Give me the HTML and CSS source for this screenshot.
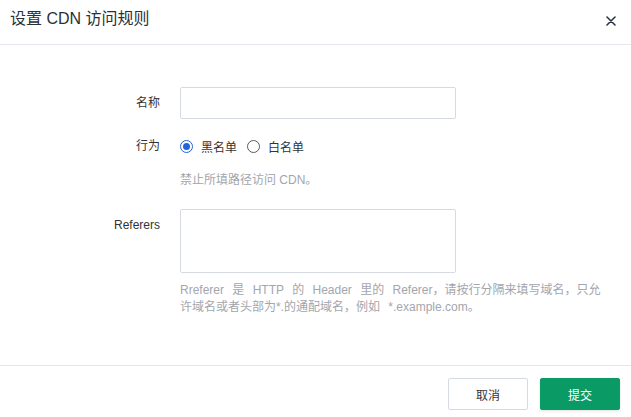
FILE: index.html
```html
<!DOCTYPE html>
<html lang="zh">
<head>
<meta charset="utf-8">
<link rel="stylesheet" href="styles.css">
</head>
<body>
<div class="dialog">
  <div class="dialog-header">
    <h1 class="dialog-title">设置 CDN 访问规则</h1>
    <button class="close-btn" aria-label="关闭">
      <svg width="10" height="10" viewBox="0 0 10 10"><path d="M1 1L9 9M9 1L1 9" stroke="#2b3340" stroke-width="1.6" stroke-linecap="round"/></svg>
    </button>
  </div>
  <div class="dialog-body">
    <div class="form-row row-name">
      <label class="form-label">名称</label>
      <div class="form-control"><input class="text-input" type="text"></div>
    </div>
    <div class="form-row row-action">
      <label class="form-label">行为</label>
      <div class="form-control">
        <div class="radio-group">
          <span class="radio checked"><span class="radio-dot"></span></span><span class="radio-text">黑名单</span>
          <span class="radio"></span><span class="radio-text">白名单</span>
        </div>
        <p class="hint">禁止所填路径访问 CDN。</p>
      </div>
    </div>
    <div class="form-row row-referers">
      <label class="form-label label-top">Referers</label>
      <div class="form-control">
        <textarea class="textarea"></textarea>
        <p class="hint hint-wide">Rreferer 是 HTTP 的 Header 里的 Referer，请按行分隔来填写域名，只允许域名或者头部为*.的通配域名，例如 *.example.com。</p>
      </div>
    </div>
  </div>
  <div class="dialog-footer">
    <button class="btn btn-cancel">取消</button>
    <button class="btn btn-primary">提交</button>
  </div>
</div>
</body>
</html>
```
FILE: styles.css
```css
* { box-sizing: border-box; }
html, body {
  margin: 0;
  padding: 0;
  background: #fff;
}
body {
  font-family: "Liberation Sans", "Noto Sans CJK SC", sans-serif;
  font-size: 12px;
  color: #333;
}
.dialog {
  width: 631px;
  height: 417px;
  display: flex;
  flex-direction: column;
}
.dialog-header {
  height: 45px;
  border-bottom: 1px solid #e4e8ee;
  display: flex;
  align-items: center;
  justify-content: space-between;
  padding: 0 15px 6px 10px;
}
.dialog-title {
  margin: 0;
  font-size: 16px;
  font-weight: normal;
  color: #2b2f36;
  line-height: 24px;
}
.close-btn {
  border: 0;
  background: none;
  padding: 0;
  width: 10px;
  height: 10px;
  display: flex;
  margin-top: 4px;
}
.dialog-body {
  flex: 1;
  padding-top: 42px;
}
.form-row {
  display: flex;
  align-items: flex-start;
}
.form-label {
  width: 160px;
  text-align: right;
  margin-right: 20px;
  color: #333;
  line-height: 32px;
}
.row-action { margin-top: 14px; }
.row-action .form-label { line-height: 26px; }
.row-referers { margin-top: 20px; }
.label-top { line-height: 32px; }
.text-input {
  display: block;
  width: 276px;
  height: 32px;
  border: 1px solid #d6dbe3;
  border-radius: 2px;
  outline: none;
  padding: 0 8px;
  margin: 0;
}
.radio-group {
  display: flex;
  align-items: center;
  height: 26px;
}
.radio {
  width: 13px;
  height: 13px;
  border: 1px solid #555b66;
  border-radius: 50%;
  display: inline-flex;
  align-items: center;
  justify-content: center;
  margin-right: 8px;
}
.radio.checked {
  border-color: #2463d8;
}
.radio-dot {
  width: 7px;
  height: 7px;
  border-radius: 50%;
  background: #2463d8;
}
.radio-text {
  margin-right: 10px;
  color: #333;
}
.hint {
  margin: 13px 0 0;
  color: #a2a6ad;
  line-height: 17px;
}
.hint-wide {
  width: 426px;
  margin-top: 9px;
  word-spacing: 5px;
}
.textarea {
  display: block;
  width: 276px;
  height: 64px;
  border: 1px solid #d6dbe3;
  border-radius: 2px;
  resize: none;
  outline: none;
  margin: 0;
}
.dialog-footer {
  height: 52px;
  border-top: 1px solid #e4e8ee;
  display: flex;
  justify-content: flex-end;
  align-items: flex-start;
  padding: 12px 11px 0 0;
  gap: 12px;
}
.btn {
  width: 80px;
  height: 32px;
  border-radius: 2px;
  font-family: inherit;
  font-size: 12px;
  cursor: pointer;
}
.btn-cancel {
  background: #fff;
  border: 1px solid #d6dbe3;
  color: #333;
}
.btn-primary {
  background: #0a9a65;
  border: 1px solid #0a9a65;
  color: #fff;
  box-shadow: 0 1px 3px rgba(0,0,0,0.12);
}
```
